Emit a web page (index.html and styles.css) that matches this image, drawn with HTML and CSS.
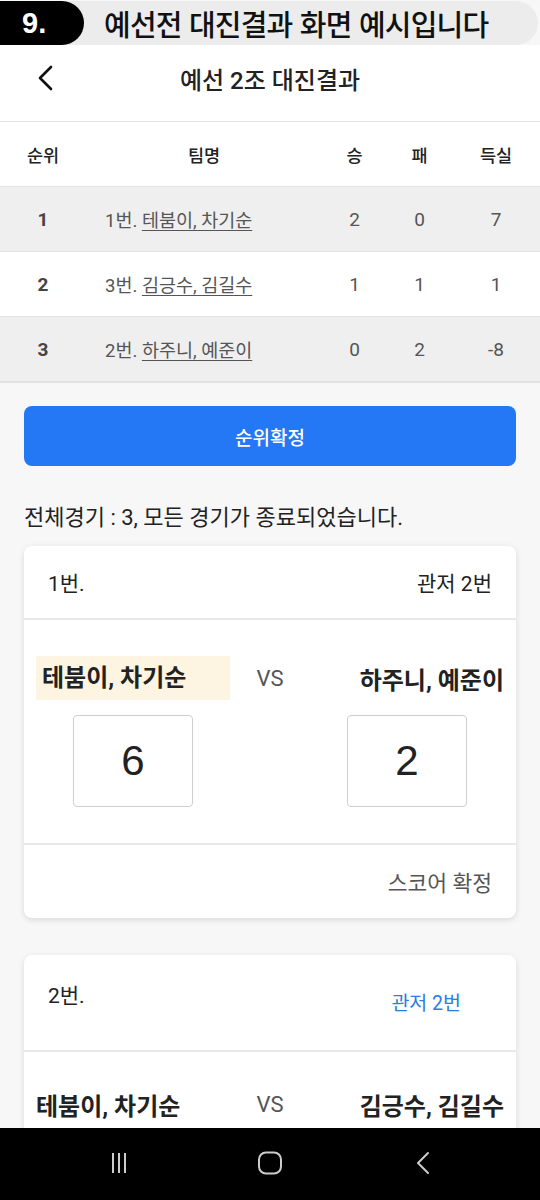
FILE: index.html
```html
<!DOCTYPE html>
<html lang="ko">
<head>
    <meta charset="UTF-8">
    <meta name="viewport" content="width=device-width, initial-scale=1.0">
    <title>예선 2조 대진결과</title>
    <link rel="stylesheet" href="styles.css">
</head>
<body>
    <div id="wrap">
        <!-- 상단 설명 배너 -->
        <div class="banner">
            <div class="banner-num">9.</div>
            <div class="banner-text">예선전 대진결과 화면 예시입니다</div>
        </div>

        <div class="appbar">
            <svg class="back" width="20" height="26" viewBox="0 0 20 26">
                <path d="M15 2 L4 13 L15 24" fill="none" stroke="#111" stroke-width="2.6" stroke-linecap="round" stroke-linejoin="round"/>
            </svg>
            <div class="appbar-title">예선 2조 대진결과</div>
        </div>

        <!-- 순위표 -->
        <div class="rank-table">
            <div class="row head">
                <div class="c-rank">순위</div>
                <div class="c-team center">팀명</div>
                <div class="c-num">승</div>
                <div class="c-num">패</div>
                <div class="c-diff">득실</div>
            </div>
            <div class="row gray">
                <div class="c-rank bold">1</div>
                <div class="c-team">1번. <u>테붐이, 차기순</u></div>
                <div class="c-num">2</div>
                <div class="c-num">0</div>
                <div class="c-diff">7</div>
            </div>
            <div class="row">
                <div class="c-rank bold">2</div>
                <div class="c-team">3번. <u>김긍수, 김길수</u></div>
                <div class="c-num">1</div>
                <div class="c-num">1</div>
                <div class="c-diff">1</div>
            </div>
            <div class="row gray">
                <div class="c-rank bold">3</div>
                <div class="c-team">2번. <u>하주니, 예준이</u></div>
                <div class="c-num">0</div>
                <div class="c-num">2</div>
                <div class="c-diff">-8</div>
            </div>
        </div>

        <div class="content">
            <div class="confirm-btn">순위확정</div>
            <p class="summary">전체경기 : 3, 모든 경기가 종료되었습니다.</p>

            <!-- 경기 1 -->
            <div class="card">
                <div class="card-head">
                    <span>1번.</span>
                    <span>관저 2번</span>
                </div>
                <div class="card-body">
                    <div class="names">
                        <div class="team left win">테붐이, 차기순</div>
                        <div class="vs">VS</div>
                        <div class="team right">하주니, 예준이</div>
                    </div>
                    <div class="scores">
                        <div class="score-box">6</div>
                        <div></div>
                        <div class="score-box">2</div>
                    </div>
                </div>
                <div class="card-foot">스코어 확정</div>
            </div>

            <!-- 경기 2 -->
            <div class="card">
                <div class="card-head top">
                    <span>2번.</span>
                    <span class="court">관저 2번</span>
                </div>
                <div class="card-body next">
                    <div class="names">
                        <div class="team left">테붐이, 차기순</div>
                        <div class="vs">VS</div>
                        <div class="team right">김긍수, 김길수</div>
                    </div>
                </div>
            </div>
        </div>

        <!-- 안드로이드 하단 네비게이션 -->
        <div class="navbar">
            <svg width="16" height="24" viewBox="0 0 16 24">
                <path d="M2 2 V22 M8 2 V22 M14 2 V22" stroke="#ccc" stroke-width="2"/>
            </svg>
            <svg width="26" height="24" viewBox="0 0 26 24">
                <rect x="2" y="1.5" width="22" height="21" rx="7" fill="none" stroke="#ccc" stroke-width="2"/>
            </svg>
            <svg width="18" height="24" viewBox="0 0 18 24">
                <path d="M14 2 L4 12 L14 22" fill="none" stroke="#ccc" stroke-width="2" stroke-linecap="round" stroke-linejoin="round"/>
            </svg>
        </div>
    </div>
</body>
</html>
```

FILE: styles.css
```css
*{margin: 0; padding: 0; box-sizing: border-box;}
body {
    width: 540px;
    height: 1200px;
    overflow: hidden;
    background: #f7f7f7;
    font-family: Roboto, "Noto Sans CJK KR", sans-serif;
    color: #222;
}
#wrap {
    width: 100%;
    height: 1200px;
    overflow: hidden;
    background: #f7f7f7;
}
.banner {
    height: 44px;
    margin-top: 1px;
    margin-right: 2px;
    display: flex;
    align-items: center;
    background: #ececec;
    border-radius: 0 22px 22px 0;
}
.banner-num {
    width: 84px;
    height: 44px;
    background: #000;
    color: #fff;
    border-radius: 0 22px 22px 0;
    font-family: "Liberation Sans", sans-serif;
    font-weight: bold;
    font-size: 29px;
    line-height: 44px;
    padding-left: 22px;
}
.banner-text {
    margin-left: 20px;
    font-family: "Noto Sans CJK KR", sans-serif;
    font-weight: 500;
    font-size: 29px;
    letter-spacing: -0.8px;
    color: #111;
    line-height: 44px;
}
.appbar {
    height: 76px;
    background: #fff;
    position: relative;
    display: flex;
    align-items: center;
    justify-content: center;
    padding-bottom: 10px;
}
.back {
    position: absolute;
    left: 36px;
    top: 20px;
}
.appbar-title {
    font-size: 24px;
    font-weight: 500;
    color: #222;
}
.rank-table {
    background: #fff;
    border-top: 1px solid #e6e6e6;
    border-bottom: 2px solid #e3e3e3;
}
.row {
    display: flex;
    align-items: center;
    height: 65px;
    font-size: 19px;
    color: #555;
    border-top: 1px solid #e4e4e4;
}
.row.head {
    height: 64px;
    border-top: none;
    color: #222;
    font-size: 17.5px;
    font-weight: 500;
}
.row.gray {
    background: #efefef;
}
.c-rank {
    width: 86px;
    text-align: center;
}
.c-rank.bold {
    font-weight: bold;
    font-size: 19px;
    color: #444;
}
.c-team {
    width: 236px;
    padding-left: 19px;
    font-size: 18.5px;
}
.c-team.center {
    text-align: center;
    padding-left: 0;
    font-size: 17.5px;
}
.c-team u {
    text-underline-offset: 3px;
}
.c-num {
    width: 65px;
    text-align: center;
}
.c-diff {
    flex: 1;
    text-align: center;
}
.content {
    padding: 23px 24px 0;
}
.confirm-btn {
    height: 60px;
    background: #2478f5;
    color: #fff;
    border-radius: 8px;
    font-size: 19px;
    font-weight: 500;
    display: flex;
    align-items: center;
    justify-content: center;
}
.summary {
    font-size: 22px;
    color: #222;
    margin: 38px 0 14px;
    line-height: 28px;
}
.card {
    background: #fff;
    border-radius: 8px;
    box-shadow: 0 2px 6px rgba(0, 0, 0, 0.12);
    margin-bottom: 37px;
}
.card-head {
    height: 74px;
    border-bottom: 2px solid #e8e8e8;
    display: flex;
    align-items: center;
    justify-content: space-between;
    padding: 0 24px;
    font-size: 21px;
    color: #222;
}
.card-head.top {
    height: 97px;
    align-items: flex-start;
    padding-top: 24px;
}
.card-head .court {
    color: #2a7de1;
    font-size: 19.5px;
    margin-top: 8px;
    margin-right: 31px;
}
.card-body {
    padding: 36px 12px 36px;
}
.card-body.next {
    padding-top: 30px;
}
.names {
    display: grid;
    grid-template-columns: 194px 1fr 194px;
    align-items: center;
    height: 44px;
}
.team {
    font-size: 24px;
    font-weight: bold;
    color: #222;
    white-space: nowrap;
}
.team.right {
    text-align: right;
}
.team.win {
    background: #fdf5e1;
    height: 44px;
    line-height: 44px;
    padding-left: 6px;
}
.vs {
    text-align: center;
    font-size: 22px;
    color: #555;
}
.scores {
    display: grid;
    grid-template-columns: 194px 1fr 194px;
    margin-top: 15px;
}
.score-box {
    width: 120px;
    height: 92px;
    margin: 0 auto;
    border: 1px solid #ccd0d0;
    border-radius: 4px;
    font-family: "Liberation Sans", sans-serif;
    font-size: 42px;
    color: #222;
    display: flex;
    align-items: center;
    justify-content: center;
}
.card-foot {
    height: 75px;
    border-top: 2px solid #e8e8e8;
    display: flex;
    align-items: center;
    justify-content: flex-end;
    padding-right: 24px;
    font-size: 21.5px;
    color: #555;
}
.navbar {
    position: fixed;
    left: 0;
    bottom: 0;
    width: 540px;
    height: 72px;
    background: #000;
    display: flex;
    align-items: center;
    padding-bottom: 2px;
}
.navbar svg:nth-child(1) { margin-left: 111px; }
.navbar svg:nth-child(2) { margin-left: 130px; }
.navbar svg:nth-child(3) { margin-left: 131px; }
```
